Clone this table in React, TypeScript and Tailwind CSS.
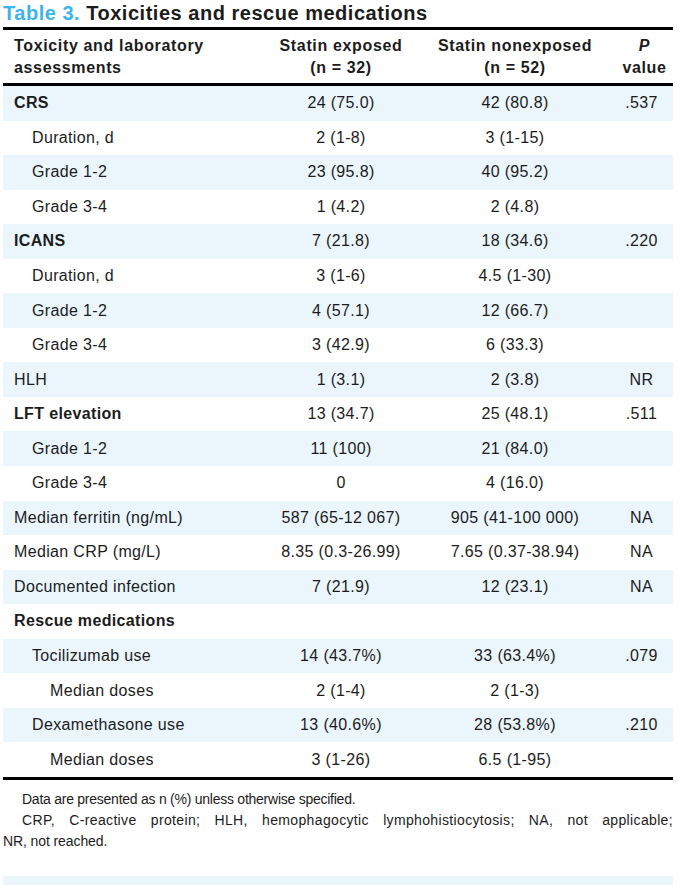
const rows: { label: string; a: string; b: string; p: string; lvl: number; bold?: boolean }[] = [
  { label: "CRS", a: "24 (75.0)", b: "42 (80.8)", p: ".537", lvl: 0, bold: true },
  { label: "Duration, d", a: "2 (1-8)", b: "3 (1-15)", p: "", lvl: 1 },
  { label: "Grade 1-2", a: "23 (95.8)", b: "40 (95.2)", p: "", lvl: 1 },
  { label: "Grade 3-4", a: "1 (4.2)", b: "2 (4.8)", p: "", lvl: 1 },
  { label: "ICANS", a: "7 (21.8)", b: "18 (34.6)", p: ".220", lvl: 0, bold: true },
  { label: "Duration, d", a: "3 (1-6)", b: "4.5 (1-30)", p: "", lvl: 1 },
  { label: "Grade 1-2", a: "4 (57.1)", b: "12 (66.7)", p: "", lvl: 1 },
  { label: "Grade 3-4", a: "3 (42.9)", b: "6 (33.3)", p: "", lvl: 1 },
  { label: "HLH", a: "1 (3.1)", b: "2 (3.8)", p: "NR", lvl: 0 },
  { label: "LFT elevation", a: "13 (34.7)", b: "25 (48.1)", p: ".511", lvl: 0, bold: true },
  { label: "Grade 1-2", a: "11 (100)", b: "21 (84.0)", p: "", lvl: 1 },
  { label: "Grade 3-4", a: "0", b: "4 (16.0)", p: "", lvl: 1 },
  { label: "Median ferritin (ng/mL)", a: "587 (65-12 067)", b: "905 (41-100 000)", p: "NA", lvl: 0 },
  { label: "Median CRP (mg/L)", a: "8.35 (0.3-26.99)", b: "7.65 (0.37-38.94)", p: "NA", lvl: 0 },
  { label: "Documented infection", a: "7 (21.9)", b: "12 (23.1)", p: "NA", lvl: 0 },
  { label: "Rescue medications", a: "", b: "", p: "", lvl: 0, bold: true },
  { label: "Tocilizumab use", a: "14 (43.7%)", b: "33 (63.4%)", p: ".079", lvl: 1 },
  { label: "Median doses", a: "2 (1-4)", b: "2 (1-3)", p: "", lvl: 2 },
  { label: "Dexamethasone use", a: "13 (40.6%)", b: "28 (53.8%)", p: ".210", lvl: 1 },
  { label: "Median doses", a: "3 (1-26)", b: "6.5 (1-95)", p: "", lvl: 2 },
];

const indent = ["pl-[11px]", "pl-[29px]", "pl-[47px]"];

export default function App() {
  return (
    <div className="w-[678px] h-[885px] bg-white text-[#1c1c1c] font-['Liberation_Sans',Arial,sans-serif] px-[3px] pt-[1px] overflow-hidden flex flex-col">
      <h1 className="text-[20px] leading-[24px] font-bold tracking-[0.52px]">
        <span className="text-[#3db4ea]">Table 3.</span> Toxicities and rescue medications
      </h1>
      <div className="w-[670px] mt-[2px] border-t-[3px] border-b-[3px] border-black">
        <div className="grid grid-cols-[259px_158px_190px_63px] h-[56px] border-b-[3px] border-black font-bold text-[16px] leading-[22px] tracking-[0.65px] items-center">
          <div className="pl-[11px]">Toxicity and laboratory<br />assessments</div>
          <div className="text-center">Statin exposed<br />(n = 32)</div>
          <div className="text-center">Statin nonexposed<br />(n = 52)</div>
          <div className="text-center pl-[6px]"><i>P</i><br />value</div>
        </div>
        {rows.map((r, i) => (
          <div
            key={i}
            className={`grid grid-cols-[259px_158px_190px_63px] h-[34.55px] items-center text-[16px] tracking-[0.35px] ${i % 2 === 0 ? "bg-[#eaf5fc]" : "bg-white"}`}
          >
            <div className={`${indent[r.lvl]} ${r.bold ? "font-bold" : ""}`}>{r.label}</div>
            <div className="text-center">{r.a}</div>
            <div className="text-center">{r.b}</div>
            <div className="text-center">{r.p}</div>
          </div>
        ))}
      </div>
      <div className="mt-[9px] w-[670px] text-[14px] leading-[21px] text-[#1c1c1c]">
        <p className="pl-[19px] tracking-[-0.25px]">Data are presented as n (%) unless otherwise specified.</p>
        <p className="pl-[19px] tracking-[0.35px] text-justify [text-align-last:justify]">
          CRP, C-reactive protein; HLH, hemophagocytic lymphohistiocytosis; NA, not applicable;
        </p>
        <p className="tracking-[-0.1px]">NR, not reached.</p>
      </div>
      <div className="mt-auto h-[9px] w-[670px] bg-[#eaf5fc]"></div>
    </div>
  );
}
